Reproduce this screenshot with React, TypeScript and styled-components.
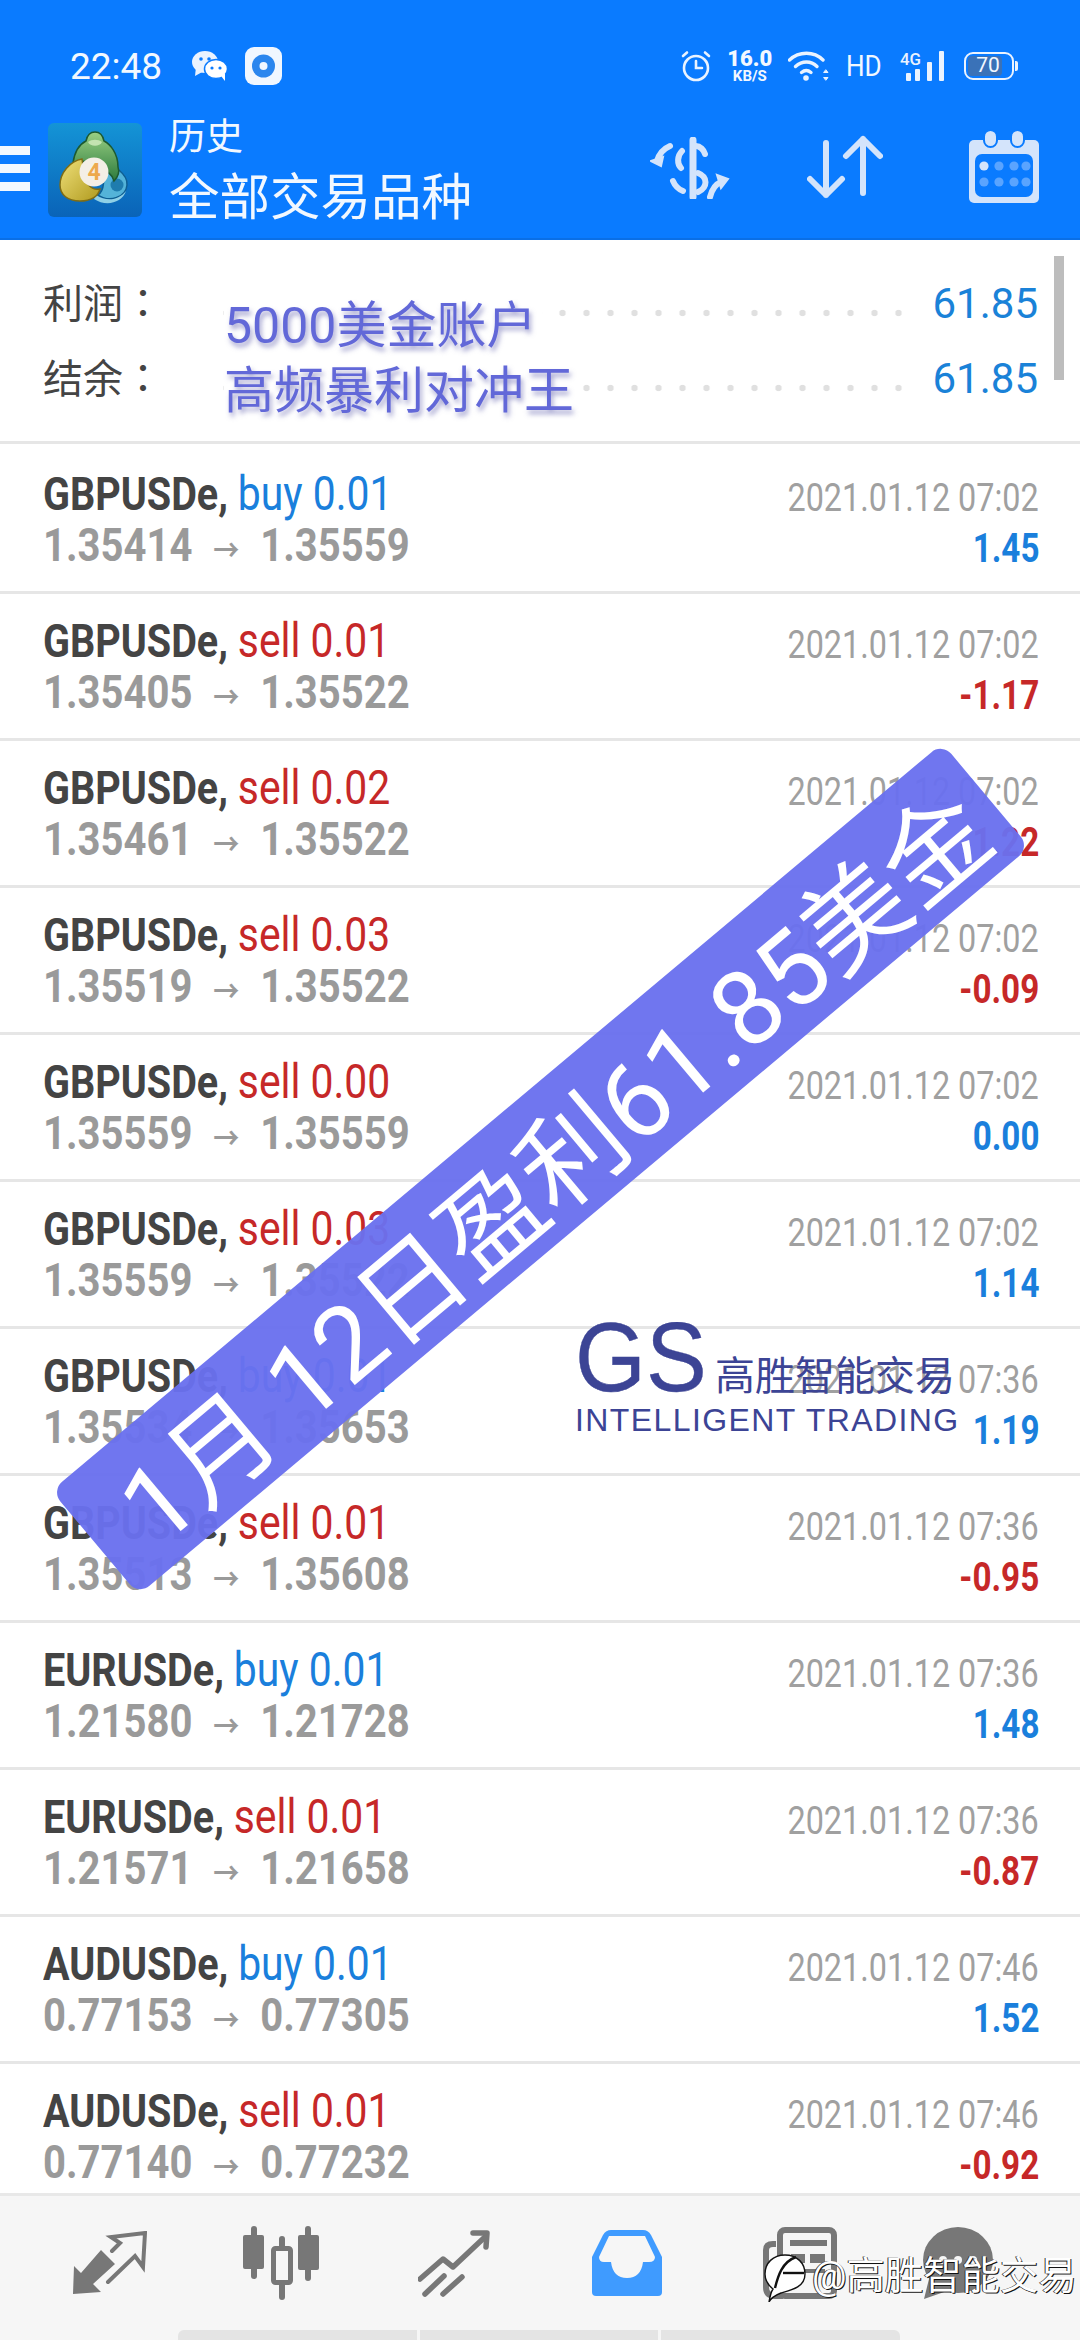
import styled, { createGlobalStyle } from "styled-components";

type Trade = {
  symbol: string;
  side: "buy" | "sell";
  lots: string;
  open: string;
  close: string;
  time: string;
  profit: string;
};

const trades: Trade[] = [
  { symbol: "GBPUSDe", side: "buy", lots: "0.01", open: "1.35414", close: "1.35559", time: "07:02", profit: "1.45" },
  { symbol: "GBPUSDe", side: "sell", lots: "0.01", open: "1.35405", close: "1.35522", time: "07:02", profit: "-1.17" },
  { symbol: "GBPUSDe", side: "sell", lots: "0.02", open: "1.35461", close: "1.35522", time: "07:02", profit: "-1.22" },
  { symbol: "GBPUSDe", side: "sell", lots: "0.03", open: "1.35519", close: "1.35522", time: "07:02", profit: "-0.09" },
  { symbol: "GBPUSDe", side: "sell", lots: "0.00", open: "1.35559", close: "1.35559", time: "07:02", profit: "0.00" },
  { symbol: "GBPUSDe", side: "sell", lots: "0.03", open: "1.35559", close: "1.35522", time: "07:02", profit: "1.14" },
  { symbol: "GBPUSDe", side: "buy", lots: "0.01", open: "1.35534", close: "1.35653", time: "07:36", profit: "1.19" },
  { symbol: "GBPUSDe", side: "sell", lots: "0.01", open: "1.35513", close: "1.35608", time: "07:36", profit: "-0.95" },
  { symbol: "EURUSDe", side: "buy", lots: "0.01", open: "1.21580", close: "1.21728", time: "07:36", profit: "1.48" },
  { symbol: "EURUSDe", side: "sell", lots: "0.01", open: "1.21571", close: "1.21658", time: "07:36", profit: "-0.87" },
  { symbol: "AUDUSDe", side: "buy", lots: "0.01", open: "0.77153", close: "0.77305", time: "07:46", profit: "1.52" },
  { symbol: "AUDUSDe", side: "sell", lots: "0.01", open: "0.77140", close: "0.77232", time: "07:46", profit: "-0.92" },
];

const App = () => {
  return (
    <Page>
      <GlobalStyle />
      <Header>
        <StatusBar>
          <StatusLeft>
            <Clock>22:48</Clock>
            <WeChatIcon />
            <DiscIcon />
          </StatusLeft>
          <StatusRight>
            <AlarmIcon />
            <NetSpeed>
              <b>16.0</b>
              <small>KB/S</small>
            </NetSpeed>
            <WifiIcon />
            <HdLabel>HD</HdLabel>
            <SignalIcon />
            <Battery>
              <BatteryFill>70</BatteryFill>
            </Battery>
          </StatusRight>
        </StatusBar>
        <ToolBar>
          <Hamburger>
            <i />
            <i />
            <i />
          </Hamburger>
          <MtLogo />
          <TitleBlock>
            <SmallTitle>历史</SmallTitle>
            <BigTitle>全部交易品种</BigTitle>
          </TitleBlock>
          <ToolIcons>
            <DollarIcon />
            <SortIcon />
            <CalendarIcon />
          </ToolIcons>
        </ToolBar>
      </Header>

      <Summary>
        <SummaryRow>
          <SummaryLabel>利润：</SummaryLabel>
          <Leader />
          <SummaryValue>61.85</SummaryValue>
        </SummaryRow>
        <SummaryRow>
          <SummaryLabel>结余：</SummaryLabel>
          <Leader />
          <SummaryValue>61.85</SummaryValue>
        </SummaryRow>
        <ScrollThumb />
        <PromoNote>
          <span>5000美金账户</span>
          <span>高频暴利对冲王</span>
        </PromoNote>
      </Summary>

      <TradeList>
        {trades.map((t, i) => (
          <TradeRow key={i}>
            <TradeLeft>
              <Squeeze>
                <Symbol>{t.symbol}, </Symbol>
                <SideText $side={t.side}>
                  {t.side} {t.lots}
                </SideText>
              </Squeeze>
              <Squeeze $scale={0.87}>
                <Price>
                  {t.open}
                  <PriceArrow>→</PriceArrow>
                  {t.close}
                </Price>
              </Squeeze>
            </TradeLeft>
            <TradeRight>
              <Squeeze $right $scale={0.83}>
                <DateText>2021.01.12 {t.time}</DateText>
              </Squeeze>
              <Squeeze $right $scale={0.83}>
                <Profit $loss={t.profit.startsWith("-")}>{t.profit}</Profit>
              </Squeeze>
            </TradeRight>
          </TradeRow>
        ))}
      </TradeList>

      <BottomNav>
        <NavIcons>
          <TradeIcon />
          <CandleIcon />
          <TrendIcon />
          <InboxIcon />
          <NewsIcon />
          <ChatIcon />
        </NavIcons>
        <HomeBar>
          <i />
          <i />
          <i />
        </HomeBar>
      </BottomNav>

      <Banner>1月 12日盈利61.85美金</Banner>

      <GsMark>
        <GsTop>
          <GsLetters>GS</GsLetters>
          <GsName>高胜智能交易</GsName>
        </GsTop>
        <GsSub>INTELLIGENT TRADING</GsSub>
      </GsMark>

      <Credit>
        <CreditLogo />
        <span>@高胜智能交易</span>
      </Credit>
    </Page>
  );
};

export default App;

/* status bar icons */
const WeChatIcon = () => (
  <svg width="36" height="30" viewBox="0 0 36 30">
    <ellipse cx="13" cy="11" rx="13" ry="11" fill="#eaf3ff" />
    <path d="M4 16 L3 25 L12 20Z" fill="#eaf3ff" />
    <ellipse cx="24" cy="18" rx="11.5" ry="9.5" fill="#fff" stroke="#0a7bff" strokeWidth="1.5" />
    <path d="M29 25 L33 30 L33 22Z" fill="#fff" />
    <circle cx="9" cy="8" r="1.8" fill="#0a7bff" />
    <circle cx="17" cy="8" r="1.8" fill="#0a7bff" />
    <circle cx="20" cy="17" r="1.6" fill="#0a7bff" />
    <circle cx="28" cy="17" r="1.6" fill="#0a7bff" />
  </svg>
);

const DiscIcon = () => (
  <svg width="37" height="38" viewBox="0 0 37 38">
    <rect x="0" y="0" width="37" height="38" rx="9" fill="#f0f7ff" />
    <circle cx="18.5" cy="19" r="11.5" fill="#2a86ee" />
    <circle cx="18.5" cy="19" r="4" fill="#f0f7ff" />
  </svg>
);

const AlarmIcon = () => (
  <svg width="30" height="32" viewBox="0 0 30 32" fill="none" stroke="#eaf3ff" strokeWidth="2.6" strokeLinecap="round">
    <circle cx="15" cy="18" r="12" />
    <path d="M15 11 V18 H21" />
    <path d="M2 6 L6 2.5 M28 6 L24 2.5" />
  </svg>
);

const WifiIcon = () => (
  <svg width="42" height="32" viewBox="0 0 42 32" fill="none" stroke="#eaf3ff" strokeWidth="3.4" strokeLinecap="round">
    <path d="M1.5 10 C11 1 26 1 35 10" />
    <path d="M7.5 16.5 C14 10.5 23 10.5 29 16.5" />
    <path d="M13.5 22.5 C16.5 20 20 20 23 22.5" />
    <circle cx="18" cy="28" r="2" fill="#eaf3ff" strokeWidth="1.6" />
    <path d="M38 20 L40 22.5 H36Z M38 30 L40 27.5 H36Z" fill="#eaf3ff" strokeWidth="1" />
  </svg>
);

const SignalIcon = () => (
  <svg width="46" height="32" viewBox="0 0 46 32">
    <text x="0" y="15" fontFamily="Roboto, sans-serif" fontSize="17" fontWeight="500" fill="#eaf3ff" textLength="21" lengthAdjust="spacingAndGlyphs">
      4G
    </text>
    <rect x="6" y="23" width="5" height="8" rx="1" fill="#eaf3ff" />
    <rect x="15" y="19" width="5" height="12" rx="1" fill="#eaf3ff" />
    <rect x="27" y="12" width="5" height="19" rx="1" fill="#eaf3ff" />
    <rect x="39" y="1" width="5" height="30" rx="1" fill="#eaf3ff" />
  </svg>
);

/* toolbar icons */
const MtLogo = () => (
  <LogoBox width="94" height="94" viewBox="0 0 94 94">
    <defs>
      <linearGradient id="mtBg" x1="0" y1="0" x2="0" y2="1">
        <stop offset="0" stopColor="#1494d6" />
        <stop offset="1" stopColor="#0a63b8" />
      </linearGradient>
      <linearGradient id="mtGold" x1="0" y1="0" x2="1" y2="1">
        <stop offset="0" stopColor="#efe07a" />
        <stop offset="1" stopColor="#b09a1e" />
      </linearGradient>
      <linearGradient id="mtGreen" x1="0" y1="0" x2="0" y2="1">
        <stop offset="0" stopColor="#9ad084" />
        <stop offset="1" stopColor="#2c7a3c" />
      </linearGradient>
    </defs>
    <rect width="94" height="94" rx="6" fill="url(#mtBg)" />
    <path d="M52 40 C66 40 80 52 79 62 C78 74 62 80 50 72 C56 68 58 56 52 40Z" fill="#54b3d8" stroke="#0f5f92" strokeWidth="1.5" />
    <path d="M48 72 C60 80 72 76 78 68 C74 80 58 84 46 76Z" fill="#8fd0e6" />
    <circle cx="69" cy="62" r="6.5" fill="#1f7cae" />
    <path d="M25 40 C27 26 34 20 38 18 C39 13 42 9 47 9 C52 9 55 13 56 18 C62 21 70 30 70 44 C72 50 70 54 66 58 C62 44 34 34 25 40Z" fill="url(#mtGreen)" stroke="#1d5a30" strokeWidth="1.5" />
    <path d="M40 19 C44 16 50 16 54 19 C52 24 42 24 40 19Z" fill="#c4e3b0" />
    <path d="M34 36 C22 38 12 50 12 62 C12 72 20 78 32 78 C42 78 50 74 52 66 C44 68 36 60 36 50Z" fill="url(#mtGold)" stroke="#7e6c14" strokeWidth="1.5" />
    <circle cx="46" cy="49" r="14.5" fill="#f4efe6" />
    <text x="46" y="57" textAnchor="middle" fontFamily="Roboto, sans-serif" fontWeight="700" fontSize="23" fill="#eda94c">
      4
    </text>
  </LogoBox>
);

const DollarIcon = () => (
  <svg width="80" height="62" viewBox="0 0 80 62" fill="none" stroke="#d4e4fb" strokeWidth="6" strokeLinecap="round">
    <path d="M43 3 V60" strokeWidth="7" />
    <path d="M46 9 C50 9 54 13 55 17" />
    <path d="M32 14 C27 19 27 27 31 31" />
    <path d="M48 36 C58 40 58 50 48 55" />
    <path d="M23 44 C25 49 28 52 33 54" />
    <path d="M20 9 C13 12 9 17 7 24" />
    <path d="M1 24 L11 29 L13 20Z" fill="#d4e4fb" strokeWidth="2" />
    <path d="M60 60 C62 52 66 47 71 45" />
    <path d="M67 38 L78 42 L71 51Z" fill="#d4e4fb" strokeWidth="2" />
  </svg>
);

const SortIcon = () => (
  <svg width="76" height="66" viewBox="0 0 76 66" fill="none" stroke="#d4e4fb" strokeWidth="6" strokeLinecap="round" strokeLinejoin="round">
    <path d="M19 8 V60 M3 44 L19 60 L35 44" />
    <path d="M56 58 V4 M39 21 L56 4 L73 21" />
  </svg>
);

const CalendarIcon = () => (
  <svg width="70" height="74" viewBox="0 0 70 74">
    <rect x="0" y="11" width="70" height="63" rx="5" fill="#d4e4fb" />
    <rect x="6" y="25" width="58" height="43" rx="7" fill="#0a7bff" />
    <rect x="15" y="1" width="13" height="17" rx="6.5" fill="#d4e4fb" stroke="#0a7bff" strokeWidth="2" />
    <rect x="42" y="1" width="13" height="17" rx="6.5" fill="#d4e4fb" stroke="#0a7bff" strokeWidth="2" />
    {[16, 31, 46, 58].map((x, i) => (
      <circle key={x} cx={x - 1} cy="37" r="4.6" fill={i === 0 ? "#d4e4fb" : "#5aa4ff"} />
    ))}
    {[16, 31, 46, 58].map((x) => (
      <circle key={x} cx={x - 1} cy="53" r="4.6" fill="#5aa4ff" />
    ))}
  </svg>
);

/* bottom nav icons */
const TradeIcon = () => (
  <svg width="74" height="64" viewBox="0 0 74 64">
    <path d="M0 63 L1 35 L8 42 L28 19 L42 33 L20 53 L28 61Z" fill="#777" />
    <path d="M39 20 L47 12 L38 6 L72 2 L70 36 L62 25 L35 51" fill="none" stroke="#777" strokeWidth="4" strokeLinecap="round" />
  </svg>
);

const CandleIcon = () => (
  <svg width="76" height="74" viewBox="0 0 76 74" fill="#777">
    <rect x="8" y="0" width="6" height="53" rx="3" />
    <rect x="0" y="9" width="21" height="34" rx="2" />
    <rect x="36" y="10" width="6" height="64" rx="3" />
    <rect x="30.5" y="22.5" width="17" height="34" rx="2" fill="#f6f6f6" stroke="#777" strokeWidth="5" />
    <rect x="62" y="0" width="6" height="55" rx="3" />
    <rect x="55" y="9" width="21" height="35" rx="2" />
  </svg>
);

const TrendIcon = () => (
  <svg width="72" height="67" viewBox="0 0 72 67" fill="none" stroke="#777" strokeWidth="5.5" strokeLinecap="round" strokeLinejoin="round">
    <path d="M2 49 L25 29 L35 37 L68 6" />
    <path d="M55 3 L69 3 L68 17" />
    <path d="M7 64 L26 46" />
    <path d="M25 64 L44 47" />
  </svg>
);

const InboxIcon = () => (
  <svg width="72" height="66" viewBox="0 0 72 66">
    <path d="M20 0 H52 Q57 0 60 5 L71 27 V62 Q71 66 67 66 H5 Q1 66 1 62 V27 L12 5 Q15 0 20 0Z" fill="#3f9bff" />
    <path d="M18 6 H54 L64 27 Q64 32 58 32 H52 Q50 48 36 48 Q22 48 20 32 H13 Q8 32 8 27Z" fill="#f6f6f6" />
  </svg>
);

const NewsIcon = () => (
  <svg width="74" height="72" viewBox="0 0 74 72" fill="none" stroke="#777" strokeWidth="6">
    <rect x="17" y="3" width="54" height="66" rx="5" />
    <path d="M13 17 H10 Q3 17 3 23 V60 Q3 69 12 69 H20" />
    <rect x="28" y="14" width="35" height="4" fill="#777" strokeWidth="2" />
    <rect x="28" y="27" width="14" height="9" fill="#777" strokeWidth="0" />
    <rect x="47" y="27" width="15" height="9" fill="#777" strokeWidth="0" />
    <rect x="28" y="42" width="34" height="4" fill="#777" strokeWidth="0" />
  </svg>
);

const ChatIcon = () => (
  <svg width="70" height="72" viewBox="0 0 70 72">
    <ellipse cx="35" cy="33" rx="35" ry="33" fill="#777" />
    <path d="M7 48 L1 72 L24 64Z" fill="#777" />
    <circle cx="20" cy="33" r="4" fill="#f6f6f6" />
    <circle cx="35" cy="33" r="4" fill="#f6f6f6" />
    <circle cx="50" cy="33" r="4" fill="#f6f6f6" />
  </svg>
);

const CreditLogo = () => (
  <svg width="42" height="48" viewBox="0 0 42 48">
    <path d="M21 1 C33 1 41 9 41 20 C41 33 28 36 17 39 C12 41 7 44 5 48 C6 42 7 38 9 35 C4 31 1 26 1 20 C1 9 9 1 21 1Z" fill="#fff" stroke="#111" strokeWidth="1.4" />
    <path d="M11 34 C14 22 18 8 32 3" fill="none" stroke="#111" strokeWidth="2.4" />
    <path d="M19 19 H40" fill="none" stroke="#111" strokeWidth="2.4" />
  </svg>
);

const GlobalStyle = createGlobalStyle`
  html, body {
    margin: 0;
    padding: 0;
    background: #fff;
  }
  * {
    box-sizing: border-box;
  }
`;

const Page = styled.div`
  position: relative;
  display: flex;
  flex-direction: column;
  width: 1080px;
  height: 2340px;
  overflow: hidden;
  background: #fff;
  font-family: Roboto, "Noto Sans CJK SC", sans-serif;
`;

const Header = styled.header`
  flex: none;
  height: 240px;
  background: #0a7bff;
  border-bottom: 2px solid #0a6fe6;
  color: #f2f8ff;
`;

const StatusBar = styled.div`
  display: flex;
  align-items: center;
  justify-content: space-between;
  height: 110px;
  padding: 22px 66px 0 70px;
`;

const StatusLeft = styled.div`
  display: flex;
  align-items: center;
  gap: 17px;
`;

const Clock = styled.span`
  font-size: 37px;
  margin-right: 13px;
`;

const StatusRight = styled.div`
  display: flex;
  align-items: center;
  gap: 16px;
`;

const NetSpeed = styled.span`
  display: flex;
  flex-direction: column;
  align-items: center;
  line-height: 1;
  font-weight: 700;

  b {
    font-size: 22px;
    line-height: 20px;
  }
  small {
    font-size: 15px;
    line-height: 15px;
  }
`;

const HdLabel = styled.span`
  font-size: 29px;
  margin-left: -2px;
  transform: scaleX(0.9);
`;

const Battery = styled.span`
  position: relative;
  display: block;
  width: 50px;
  height: 28px;
  border: 2.5px solid #eaf3ff;
  border-radius: 9px;
  padding: 2px;
  margin-left: 2px;

  &::after {
    content: "";
    position: absolute;
    right: -6px;
    top: 7px;
    width: 3px;
    height: 10px;
    background: #eaf3ff;
    border-radius: 0 2px 2px 0;
  }
`;

const BatteryFill = styled.span`
  display: block;
  width: 34px;
  height: 100%;
  background: #3a72b8;
  border-radius: 4px;
  font-size: 21px;
  line-height: 19px;
  text-align: center;
  padding-left: 6px;
`;

const ToolBar = styled.div`
  display: flex;
  align-items: center;
  height: 116px;
`;

const Hamburger = styled.div`
  display: flex;
  flex-direction: column;
  gap: 9px;
  width: 30px;
  margin-right: 18px;

  i {
    display: block;
    height: 9px;
    background: #f2f8ff;
  }
`;

const LogoBox = styled.svg`
  flex: none;
  margin-top: 3px;
`;

const TitleBlock = styled.div`
  display: flex;
  flex-direction: column;
  margin-left: 27px;
  margin-top: 6px;
`;

const SmallTitle = styled.span`
  font-size: 37px;
  line-height: 54px;
`;

const BigTitle = styled.span`
  font-size: 50.5px;
  line-height: 66px;
`;

const ToolIcons = styled.div`
  display: flex;
  align-items: center;
  margin-left: auto;
  margin-right: 41px;
  gap: 77px;

  svg:last-child {
    margin-left: 9px;
    margin-top: -4px;
  }
`;

const Summary = styled.section`
  position: relative;
  flex: none;
  height: 204px;
  padding-top: 26px;
  border-bottom: 3px solid #e6e6e6;
`;

const SummaryRow = styled.div`
  display: flex;
  align-items: center;
  height: 75px;
  padding: 0 42px 0 43px;
`;

const SummaryLabel = styled.span`
  font-family: "Noto Sans CJK TC", sans-serif;
  font-size: 40px;
  color: #444;
  width: 180px;
  margin-bottom: 5px;
`;

const Leader = styled.span`
  flex: 1;
  height: 12px;
  margin: 18px 22px 0 0;
  background-image: radial-gradient(circle at center, #e0e0e0 3px, transparent 3.6px);
  background-size: 24px 12px;
  background-repeat: repeat-x;
  background-position: right center;
`;

const SummaryValue = styled.span`
  font-size: 42px;
  color: #1a82d8;
`;

const ScrollThumb = styled.div`
  position: absolute;
  top: 16px;
  right: 16px;
  width: 10px;
  height: 124px;
  background: #bdbdbd;
`;

const PromoNote = styled.div`
  position: absolute;
  left: 224px;
  top: 55px;
  display: flex;
  flex-direction: column;
  align-items: flex-start;
  gap: 3px;
  font-size: 50px;
  line-height: 62px;
  color: #6268d8;
  text-shadow: 2px 4px 5px rgba(90, 90, 170, 0.55);

  span {
    background: #fff;
    padding-right: 6px;
  }
`;

const TradeList = styled.main`
  flex: 1;
  min-height: 0;
  overflow: hidden;
`;

const TradeRow = styled.article`
  display: flex;
  justify-content: space-between;
  height: 147px;
  padding: 22px 41px 0 43px;
  border-bottom: 3px solid #e6e6e6;

  &:first-child {
    height: 150px;
    padding-top: 25px;
  }
`;

const TradeLeft = styled.div`
  display: flex;
  flex-direction: column;
  align-items: flex-start;
  gap: 1px;
`;

const TradeRight = styled.div`
  display: flex;
  flex-direction: column;
  align-items: flex-end;
  gap: 1px;
  padding-top: 4px;
`;

const Squeeze = styled.span<{ $right?: boolean; $scale?: number }>`
  display: inline-block;
  height: 50px;
  white-space: nowrap;
  transform: scaleX(${(p) => p.$scale ?? 0.86});
  transform-origin: ${(p) => (p.$right ? "right" : "left")} center;
`;

const Symbol = styled.span`
  font-size: 46px;
  line-height: 50px;
  font-weight: 700;
  color: #444;
`;

const SideText = styled.span<{ $side: "buy" | "sell" }>`
  font-size: 47.5px;
  line-height: 50px;
  color: ${(p) => (p.$side === "buy" ? "#1a7fdc" : "#c62828")};
`;

const Price = styled.span`
  font-size: 46px;
  line-height: 50px;
  font-weight: 700;
  color: #9a9a9a;
`;

const PriceArrow = styled.span`
  font-size: 30px;
  font-weight: 700;
  margin: 0 24px;
`;

const DateText = styled.span`
  font-size: 39px;
  line-height: 50px;
  color: #a0a0a0;
`;

const Profit = styled.span<{ $loss: boolean }>`
  font-size: 40px;
  line-height: 50px;
  font-weight: 700;
  color: ${(p) => (p.$loss ? "#c62828" : "#1a7fdc")};
`;

const BottomNav = styled.nav`
  flex: none;
  display: flex;
  flex-direction: column;
  height: 147px;
  background: #f6f6f6;
  border-top: 3px solid #e8e8e8;
`;

const NavIcons = styled.div`
  display: grid;
  grid-template-columns: 170px 175px 173px 172px 160px auto;
  align-items: center;
  height: 134px;
  padding-left: 73px;
`;

const HomeBar = styled.div`
  display: flex;
  gap: 3px;
  width: 722px;
  height: 10px;
  margin-left: 178px;

  i {
    flex: 1;
    background: #e4e4e4;
  }
  i:first-child {
    border-radius: 6px 0 0 0;
  }
  i:last-child {
    border-radius: 0 6px 0 0;
  }
`;

const Banner = styled.div`
  position: absolute;
  left: -41px;
  top: 1101px;
  width: 1163px;
  height: 136px;
  display: flex;
  align-items: center;
  justify-content: center;
  padding-left: 24px;
  border-radius: 14px;
  background: rgba(106, 112, 238, 0.96);
  color: #fff;
  font-size: 105px;
  white-space: pre;
  transform: rotate(-40deg);
`;

const GsMark = styled.div`
  position: absolute;
  left: 575px;
  top: 1313px;
  display: flex;
  flex-direction: column;
  color: #3c4495;
  font-family: "Liberation Sans", "Noto Sans CJK SC", sans-serif;
`;

const GsTop = styled.div`
  display: flex;
  align-items: flex-end;
  height: 88px;
`;

const GsLetters = styled.span`
  display: inline-block;
  width: 140px;
  font-size: 98px;
  line-height: 88px;
  -webkit-text-stroke: 0.4px #3c4495;
  transform: scaleX(0.93);
  transform-origin: left center;
`;

const GsName = styled.span`
  font-size: 40px;
  line-height: 50px;
  white-space: nowrap;
`;

const GsSub = styled.span`
  font-size: 32px;
  line-height: 36px;
  margin-top: 1px;
  letter-spacing: 1.4px;
  white-space: nowrap;
`;

const Credit = styled.div`
  position: absolute;
  left: 764px;
  top: 2254px;
  display: flex;
  align-items: flex-start;
  gap: 6px;
  font-size: 38.4px;
  line-height: 44px;
  color: #fff;
  text-shadow: 1px 1px 0 #111, -1px 0 0 #333;
  white-space: nowrap;
`;
